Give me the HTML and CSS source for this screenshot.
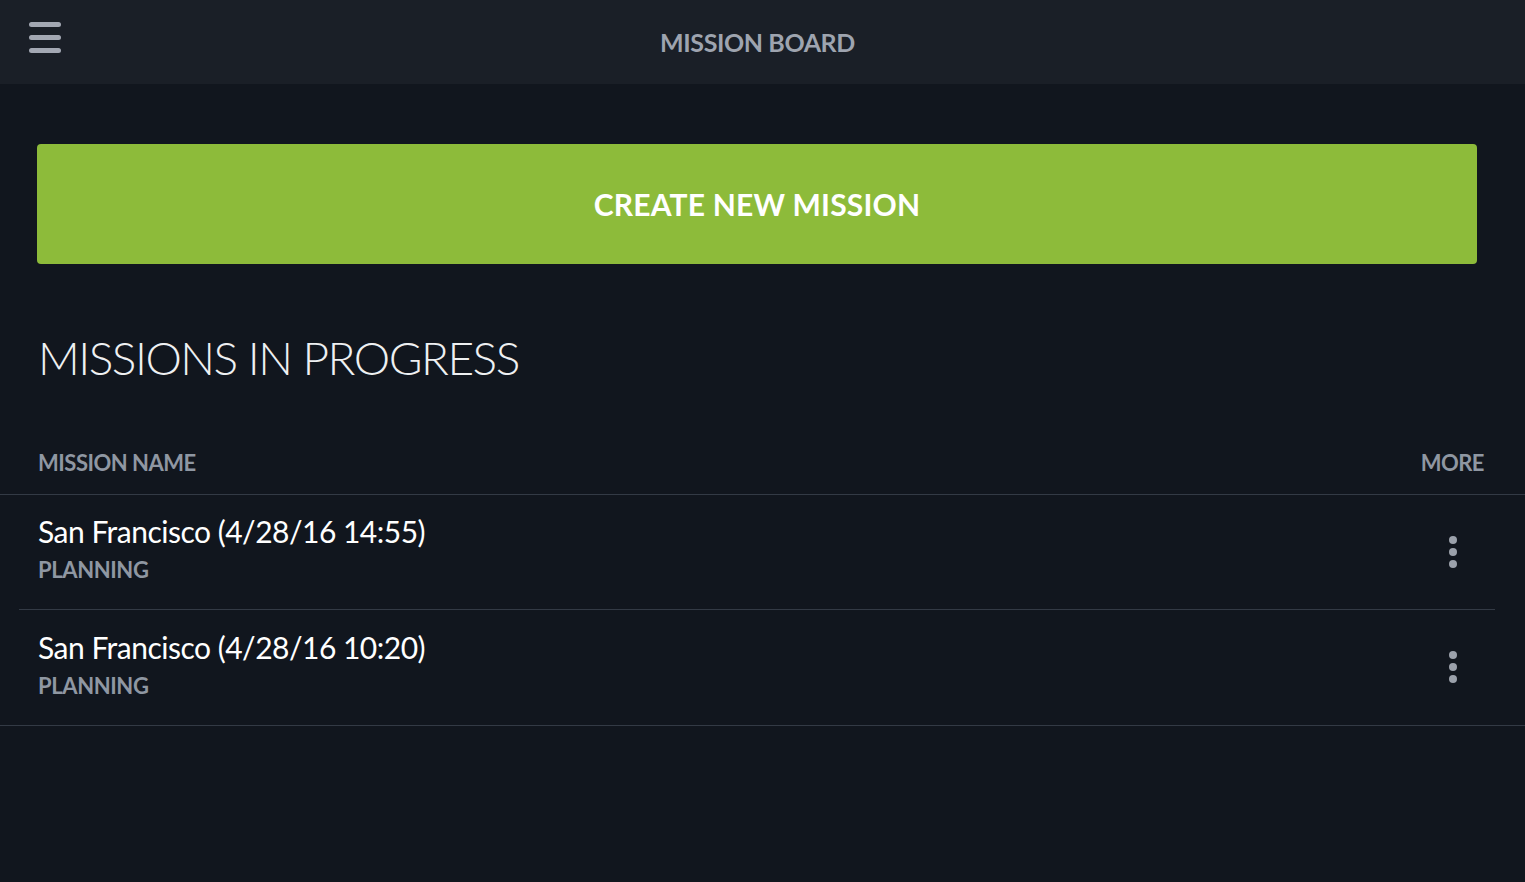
FILE: index.html
```html
<!DOCTYPE html>
<html lang="en">
<head>
    <meta charset="UTF-8">
    <title>Mission Board</title>
    <link rel="stylesheet" href="styles.css">
</head>
<body>
    <header class="topbar">
        <button class="menu-btn" aria-label="Menu">
            <span></span><span></span><span></span>
        </button>
        <h1 class="topbar-title">MISSION BOARD</h1>
    </header>

    <main class="board">
        <button class="create-btn">CREATE NEW MISSION</button>

        <h2 class="section-title">MISSIONS IN PROGRESS</h2>

        <div class="mission-table">
            <div class="table-head">
                <span>MISSION NAME</span>
                <span>MORE</span>
            </div>

            <div class="mission-row">
                <div class="mission-info">
                    <div class="mission-name">San Francisco (4/28/16 14:55)</div>
                    <div class="mission-status">PLANNING</div>
                </div>
                <button class="more-btn" aria-label="More"><i></i><i></i><i></i></button>
            </div>

            <div class="mission-row">
                <div class="mission-info">
                    <div class="mission-name">San Francisco (4/28/16 10:20)</div>
                    <div class="mission-status">PLANNING</div>
                </div>
                <button class="more-btn" aria-label="More"><i></i><i></i><i></i></button>
            </div>
        </div>
    </main>
</body>
</html>
```

FILE: styles.css
```css
* {
    box-sizing: border-box;
}

body {
    margin: 0;
    min-height: 100vh;
    background-color: #11161e;
    font-family: Lato, 'Open Sans', sans-serif;
    color: #ffffff;
}

button {
    font-family: inherit;
    cursor: pointer;
}

.topbar {
    height: 84px;
    background-color: #1a1f27;
    display: flex;
    align-items: center;
    justify-content: center;
    position: relative;
}

.menu-btn {
    position: absolute;
    left: 29px;
    top: 22px;
    background: none;
    border: none;
    padding: 0;
    display: flex;
    flex-direction: column;
    gap: 8px;
}

.menu-btn span {
    display: block;
    width: 32px;
    height: 5px;
    border-radius: 3px;
    background-color: #a3a8b3;
}

.topbar-title {
    margin: 0 0 0 -10px;
    font-size: 25px;
    font-weight: 700;
    color: #9ea4af;
    letter-spacing: -0.4px;
}

.board {
    padding: 60px 0 0;
}

.create-btn {
    display: block;
    width: calc(100% - 85px);
    margin: 0 0 0 37px;
    height: 120px;
    background-color: #8dbb3a;
    border: none;
    border-radius: 4px;
    color: #ffffff;
    font-size: 30px;
    font-weight: 700;
    letter-spacing: 0.2px;
}

.section-title {
    margin: 64px 0 0 38px;
    font-size: 46px;
    font-weight: 300;
    color: #eef0f2;
    line-height: 60px;
    letter-spacing: -1.5px;
}

.mission-table {
    margin-top: 61px;
}

.table-head {
    display: flex;
    justify-content: space-between;
    padding: 0 41px 0 38px;
    height: 46px;
    border-bottom: 1px solid #333a45;
    font-size: 22px;
    font-weight: 700;
    color: #8f97a2;
    letter-spacing: -0.5px;
}

.mission-row {
    display: flex;
    align-items: center;
    justify-content: space-between;
    height: 115px;
    margin: 0 30px 0 19px;
    padding: 0 38px 7px 19px;
    border-bottom: 1px solid #333a45;
}

.mission-row:last-child {
    height: 116px;
    margin: 0;
    padding: 0 68px 7px 38px;
}

.mission-name {
    font-size: 30px;
    color: #ffffff;
    line-height: 38px;
    letter-spacing: -0.5px;
    margin-bottom: 5px;
}

.mission-status {
    font-size: 22px;
    font-weight: 700;
    color: #8f97a2;
    line-height: 30px;
    letter-spacing: -0.4px;
}

.more-btn {
    background: none;
    border: none;
    padding: 0;
    display: flex;
    flex-direction: column;
    gap: 4px;
    margin-top: 6px;
}

.more-btn i {
    display: block;
    width: 8px;
    height: 8px;
    border-radius: 50%;
    background-color: #9ba1ab;
}
```
